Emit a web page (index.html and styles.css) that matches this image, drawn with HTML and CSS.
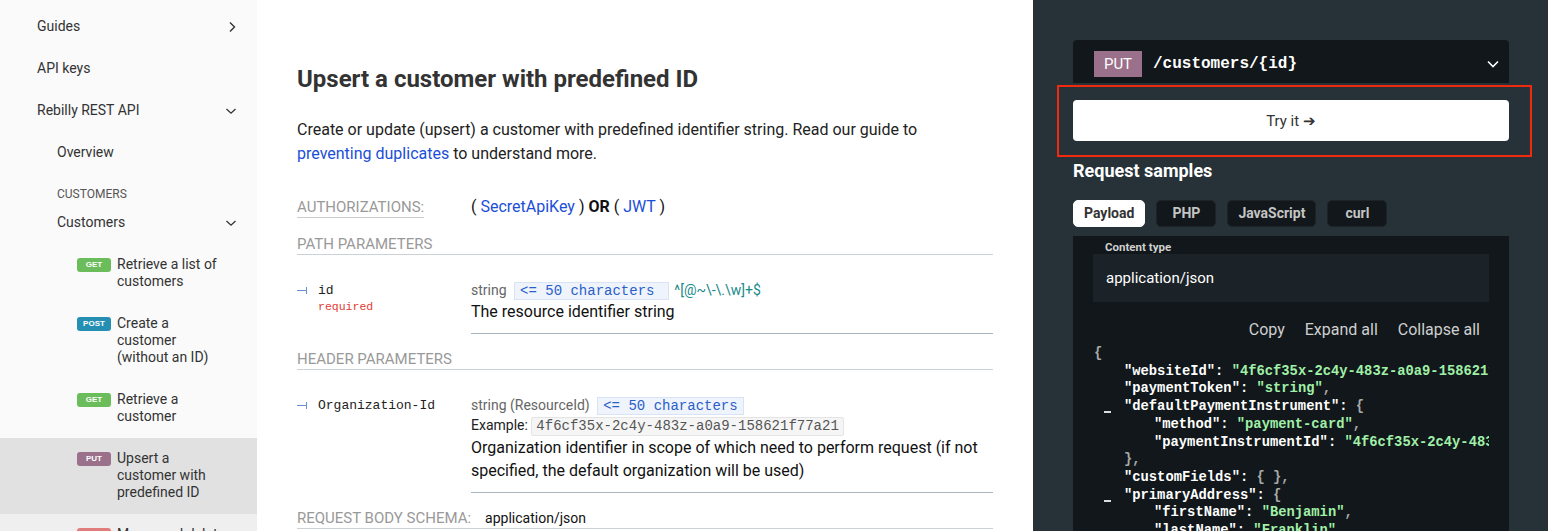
FILE: index.html
```html
<!DOCTYPE html>
<html lang="en">
<head>
<meta charset="utf-8">
<title>Upsert a customer with predefined ID</title>
<link rel="stylesheet" href="styles.css">
</head>
<body>
<div class="page">
  <nav class="sidebar">
    <div class="nav-item"><span>Guides</span>
      <svg class="chev" width="10" height="12" viewBox="0 0 10 12"><path d="M3 1.5 L7.5 6 L3 10.5" fill="none" stroke="#333" stroke-width="1.4"/></svg>
    </div>
    <div class="nav-item"><span>API keys</span></div>
    <div class="nav-item"><span>Rebilly REST API</span>
      <svg class="chev" width="12" height="10" viewBox="0 0 12 10"><path d="M1.5 3 L6 7.2 L10.5 3" fill="none" stroke="#333" stroke-width="1.3"/></svg>
    </div>
    <div class="nav-item lvl2"><span>Overview</span></div>
    <div class="nav-section">CUSTOMERS</div>
    <div class="nav-item lvl2"><span>Customers</span>
      <svg class="chev" width="12" height="10" viewBox="0 0 12 10"><path d="M1.5 3 L6 7.2 L10.5 3" fill="none" stroke="#333" stroke-width="1.3"/></svg>
    </div>
    <div class="op"><span class="badge get">GET</span><span class="op-label">Retrieve a list of customers</span></div>
    <div class="op"><span class="badge post">POST</span><span class="op-label">Create a customer (without an ID)</span></div>
    <div class="op"><span class="badge get">GET</span><span class="op-label">Retrieve a customer</span></div>
    <div class="op active"><span class="badge put">PUT</span><span class="op-label">Upsert a customer with predefined ID</span></div>
    <div class="op hover"><span class="badge del">DEL</span><span class="op-label">Merge and delete a customer</span></div>
  </nav>

  <main class="content">
    <h1 class="title">Upsert a customer with predefined ID</h1>
    <p class="intro">Create or update (upsert) a customer with predefined identifier string. Read our guide to <a href="#" class="link">preventing duplicates</a> to understand more.</p>

    <div class="auth-row">
      <div class="auth-label-wrap"><span class="auth-label">AUTHORIZATIONS:</span></div>
      <div class="auth-value">( <a href="#" class="link">SecretApiKey</a> ) <b>OR</b> ( <a href="#" class="link">JWT</a> )</div>
    </div>

    <div class="section-head">PATH PARAMETERS</div>
    <div class="param">
      <div class="param-name">
        <div class="name-line"><span class="tree"></span><span class="pname">id</span></div>
        <div class="required">required</div>
      </div>
      <div class="param-info">
        <div class="type-line"><span class="ptype">string</span> <span class="constraint wide">&lt;= 50 characters </span> <span class="pattern">^[@~\-\.\w]+$</span></div>
        <div class="desc">The resource identifier string</div>
      </div>
    </div>

    <div class="section-head">HEADER PARAMETERS</div>
    <div class="param">
      <div class="param-name">
        <div class="name-line"><span class="tree"></span><span class="pname">Organization-Id</span></div>
      </div>
      <div class="param-info">
        <div class="type-line"><span class="ptype">string (ResourceId)</span> <span class="constraint">&lt;= 50 characters</span></div>
        <div class="example-line">Example: <span class="example">4f6cf35x-2c4y-483z-a0a9-158621f77a21</span></div>
        <div class="desc">Organization identifier in scope of which need to perform request (if not specified, the default organization will be used)</div>
      </div>
    </div>

    <div class="section-head body-head">REQUEST BODY SCHEMA:<span class="body-type">application/json</span></div>
  </main>

  <aside class="panel">
    <div class="endpoint">
      <span class="ep-method">PUT</span>
      <span class="ep-path">/customers/{id}</span>
      <svg class="ep-chev" width="14" height="10" viewBox="0 0 14 10"><path d="M2 2.5 L7 7.5 L12 2.5" fill="none" stroke="#fff" stroke-width="1.6"/></svg>
    </div>
    <button class="try-btn">Try it ➔</button>
    <div class="highlight"></div>
    <h3 class="samples-title">Request samples</h3>
    <div class="tabs">
      <span class="tab active">Payload</span>
      <span class="tab">PHP</span>
      <span class="tab">JavaScript</span>
      <span class="tab">curl</span>
    </div>
    <div class="code-panel">
      <div class="ct-label">Content type</div>
      <div class="ct-box">application/json</div>
      <div class="controls"><span>Copy</span><span>Expand all</span><span>Collapse all</span></div>
      <div class="json">
        <div class="jl"><span class="pu">{</span></div>
        <div class="jl i1"><span class="k">"websiteId"</span>: <span class="s">"4f6cf35x-2c4y-483z-a0a9-158621f77a21"</span><span class="pu">,</span></div>
        <div class="jl i1"><span class="k">"paymentToken"</span>: <span class="s">"string"</span><span class="pu">,</span></div>
        <div class="jl i1"><span class="col"></span><span class="k">"defaultPaymentInstrument"</span>: <span class="pu">{</span></div>
        <div class="jl i2"><span class="k">"method"</span>: <span class="s">"payment-card"</span><span class="pu">,</span></div>
        <div class="jl i2"><span class="k">"paymentInstrumentId"</span>: <span class="s">"4f6cf35x-2c4y-483z-a0a9-158621f77a21"</span></div>
        <div class="jl i1"><span class="pu">},</span></div>
        <div class="jl i1"><span class="k">"customFields"</span>: <span class="pu">{ },</span></div>
        <div class="jl i1"><span class="col"></span><span class="k">"primaryAddress"</span>: <span class="pu">{</span></div>
        <div class="jl i2"><span class="k">"firstName"</span>: <span class="s">"Benjamin"</span><span class="pu">,</span></div>
        <div class="jl i2"><span class="k">"lastName"</span>: <span class="s">"Franklin"</span><span class="pu">,</span></div>
      </div>
    </div>
  </aside>
</div>
</body>
</html>
```
FILE: styles.css
```css
* { box-sizing: border-box; }
html, body { margin: 0; padding: 0; }
body {
  font-family: Roboto, "Liberation Sans", Arial, sans-serif;
  color: #333;
  width: 1548px;
  height: 531px;
  overflow: hidden;
}
.page { display: flex; width: 1548px; height: 531px; overflow: hidden; }

/* Sidebar */
.sidebar {
  flex: 0 0 257px;
  background: #fafafa;
  padding-top: 5.5px;
  font-size: 14px;
  line-height: 17px;
  color: #333;
}
.nav-item {
  display: flex;
  justify-content: space-between;
  align-items: center;
  padding: 12.5px 20px 12.5px 37px;
}
.nav-item.lvl2 { padding-left: 57px; }
.chev { display: block; }
.nav-section {
  padding: 12px 20px 0 57px;
  font-size: 12px;
  line-height: 16px;
  color: #555;
}
.op {
  display: flex;
  align-items: flex-start;
  padding: 12.5px 20px 12.5px 77px;
}
.op.active { background: #e1e1e1; }
.op.hover { background: #efefef; }
.badge {
  flex: 0 0 34px;
  height: 14px;
  margin-top: 1.5px;
  margin-right: 6px;
  border-radius: 3px;
  color: #fff;
  font-size: 8px;
  font-weight: 700;
  line-height: 14px;
  text-align: center;
  font-family: "Liberation Sans", Arial, sans-serif;
}
.badge.get { background: #6bbd5b; }
.badge.post { background: #248fb2; }
.badge.put { background: #9b708b; }
.badge.del { background: #e27d7d; }
.op-label { width: 112px; }

/* Middle content */
.content {
  flex: 0 0 776px;
  background: #fff;
  padding: 64px 40px 0 40px;
  color: #222;
}
.title {
  margin: 0;
  font-size: 24px;
  line-height: 30px;
  font-weight: 700;
  color: #333;
}
.intro {
  margin: 24px 0 0;
  font-size: 16px;
  line-height: 24px;
}
.link { color: #1a4ed8; text-decoration: none; }
.auth-row {
  display: flex;
  margin-top: 31px;
  height: 21px;
}
.auth-label-wrap { flex: 0 0 174px; }
.auth-label {
  display: inline-block;
  font-size: 15px;
  line-height: 20px;
  color: #999;
  border-bottom: 1px solid #ccc;
}
.auth-value {
  font-size: 16px;
  line-height: 20px;
  color: #111;
}
.auth-value b { font-weight: 700; }
.section-head {
  margin-top: 16px;
  font-size: 15px;
  line-height: 20px;
  color: #999;
  border-bottom: 1px solid #ccd1d5;
}
.param {
  display: grid;
  grid-template-columns: 174px 1fr;
  margin-top: 15px;
}
.param + .section-head { margin-top: 15px; }
.param-name { padding-top: 10px; }
.name-line { display: flex; align-items: center; height: 20px; }
.tree {
  width: 10px;
  height: 7px;
  margin-right: 11px;
  border-right: 1px solid #6b8fd6;
  background: linear-gradient(#6b8fd6, #6b8fd6) left center / 9px 1px no-repeat;
}
.pname {
  font-family: "Liberation Mono", "DejaVu Sans Mono", monospace;
  font-size: 13px;
  color: #222;
}
.required {
  padding-left: 21px;
  font-family: "Liberation Mono", "DejaVu Sans Mono", monospace;
  font-size: 11.5px;
  line-height: 13px;
  color: #e53935;
}
.param-info {
  padding: 10px 0 10px 0;
  border-bottom: 1px solid #a9b5bf;
}
.type-line { font-size: 14px; line-height: 20px; }
.ptype { color: #666; }
.constraint {
  display: inline-block;
  margin-left: 4px;
  padding: 0 5px;
  line-height: 16px;
  background: #eef3fc;
  border: 1px solid #d8e3f6;
  color: #2a5fc9;
  font-family: "Liberation Mono", "DejaVu Sans Mono", monospace;
  font-size: 14px;
  white-space: pre;
}
.pattern { color: #1a8a8a; margin-left: 2px; }
.example-line { font-size: 14px; line-height: 20px; color: #222; }
.example {
  display: inline-block;
  padding: 0 4px;
  line-height: 17px;
  background: #f5f5f5;
  border: 1px solid #e4e4e4;
  border-radius: 2px;
  color: #555;
  font-family: "Liberation Mono", "DejaVu Sans Mono", monospace;
  font-size: 14px;
}
.desc { font-size: 16px; line-height: 23px; color: #111; }
.body-head { margin-top: 15px; }
.body-type { color: #111; margin-left: 14px; font-size: 14px; }

/* Right panel */
.panel {
  flex: 0 0 515px;
  min-width: 0;
  overflow: hidden;
  position: relative;
  background: #263238;
  padding: 40px 39px 0 40px;
  color: #fff;
}
.endpoint {
  display: flex;
  align-items: center;
  height: 43px;
  padding: 5px 9px 0 21px;
  background: #11171a;
  border-radius: 4px 4px 0 0;
}
.ep-method {
  width: 48px;
  height: 26px;
  line-height: 26px;
  text-align: center;
  background: #9b708b;
  color: #fff;
  font-size: 15px;
}
.ep-path {
  margin-left: 11px;
  font-family: "Liberation Mono", "DejaVu Sans Mono", monospace;
  font-weight: 700;
  font-size: 16px;
  color: #fff;
}
.ep-chev { margin-left: auto; }
.try-btn {
  display: block;
  width: 100%;
  height: 41px;
  margin-top: 17px;
  border: 0;
  border-radius: 4px;
  background: #fff;
  color: #333;
  font-family: Roboto, "Liberation Sans", Arial, sans-serif;
  font-size: 15px;
}
.highlight {
  position: absolute;
  left: 24px;
  top: 85px;
  width: 475px;
  height: 72px;
  border: 2px solid #f0290f;
  pointer-events: none;
}
.samples-title {
  margin: 19px 0 0;
  font-size: 18px;
  line-height: 22px;
  font-weight: 700;
  color: #fff;
}
.tabs { display: flex; gap: 11px; margin-top: 18px; }
.tab {
  min-width: 60px;
  height: 27px;
  padding: 0 10px;
  line-height: 25px;
  text-align: center;
  border: 1px solid #1d2428;
  border-radius: 5px;
  background: #11171a;
  color: #c4c4c4;
  font-size: 14px;
  font-weight: 700;
}
.tab.active { background: #fff; color: #333; border-color: #fff; }
.code-panel {
  margin-top: 9px;
  background: #11171a;
  padding: 5px 20px 0 20px;
  height: 300px;
  min-width: 0;
}
.ct-label {
  padding-left: 12px;
  font-size: 11.5px;
  line-height: 13px;
  font-weight: 700;
  color: #d0d0d0;
}
.ct-box {
  height: 48px;
  line-height: 48px;
  padding: 0 13px;
  background: #1c2328;
  font-size: 15px;
  color: #fff;
}
.controls {
  display: flex;
  justify-content: flex-end;
  margin-top: 18px;
  font-size: 16px;
  line-height: 20px;
  color: #cfcfcf;
}
.controls span { padding: 0 10px; }
.controls span:last-child { padding-right: 9px; }
.json {
  margin-top: 5px;
  overflow: hidden;
  font-family: "Liberation Mono", "DejaVu Sans Mono", monospace;
  font-size: 13.8px;
  font-weight: 700;
  line-height: 17.7px;
  white-space: nowrap;
  color: #fff;
  padding-left: 1px;
}
.jl.i1 { padding-left: 30px; }
.jl.i2 { padding-left: 60px; }
.k { color: #fff; }
.s { color: #a0f0a8; }
.pu { color: #a8a8a8; }
.col {
  display: inline-block;
  width: 20px;
  margin-left: -20px;
  height: 17.7px;
  vertical-align: top;
  background: linear-gradient(#ddd, #ddd) 0 13px / 7px 2px no-repeat;
}
```
